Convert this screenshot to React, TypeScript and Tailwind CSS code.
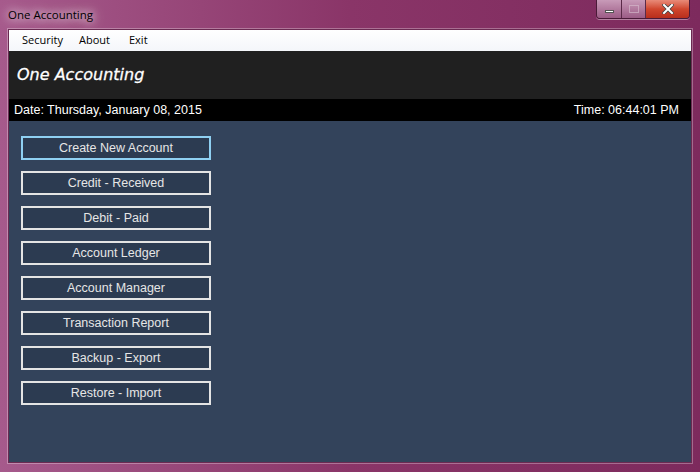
import React from 'react';

const actions = [
  'Create New Account',
  'Credit - Received',
  'Debit - Paid',
  'Account Ledger',
  'Account Manager',
  'Transaction Report',
  'Backup - Export',
  'Restore - Import',
];

export default function App() {
  return (
    <div className="w-[700px] h-[472px] flex flex-col bg-gradient-to-r from-[#a65a8c] via-[#8a3568] to-[#7d2a5d] font-['Liberation_Sans',Arial,sans-serif] overflow-hidden">
      {/* title bar */}
      <div className="h-[29px] flex items-start justify-between shrink-0">
        <span className="ml-[8px] mt-[6px] text-[11.5px] text-black font-['Open_Sans',sans-serif] [text-shadow:0_0_8px_#fff,0_0_14px_#fff]">
          One Accounting
        </span>
        <div className="flex mr-[10px] h-[19px] rounded-b-[4px] overflow-hidden border border-t-0 border-[#4a1a38] shadow-[0_1px_0_rgba(255,255,255,0.4)]">
          <div className="w-[25px] flex items-center justify-center bg-gradient-to-b from-[#c89ab8] to-[#9c5c86] border-r border-[#5a2a48]">
            <div className="w-[9px] h-[3px] bg-white border border-[#555] mt-[4px]" />
          </div>
          <div className="w-[24px] flex items-center justify-center bg-gradient-to-b from-[#c89ab8] to-[#9c5c86] border-r border-[#5a2a48]">
            <div className="w-[10px] h-[8px] border border-[#d8c0d0] opacity-60" />
          </div>
          <div className="w-[43px] flex items-center justify-center bg-gradient-to-b from-[#e88a78] via-[#d0462e] to-[#b82e1c]">
            <svg width="12" height="10" viewBox="0 0 12 10">
              <path d="M2 1 L10 9 M10 1 L2 9" stroke="#444" strokeWidth="3.6" strokeLinecap="square" />
              <path d="M2 1 L10 9 M10 1 L2 9" stroke="#fff" strokeWidth="2" strokeLinecap="square" />
            </svg>
          </div>
        </div>
      </div>

      {/* client area */}
      <div className="flex-1 mx-[8px] mb-[9px] flex flex-col border border-[#6a2a52] shadow-[0_0_0_1px_rgba(255,255,255,0.3)]">
        <div className="h-[21px] bg-gradient-to-b from-[#ffffff] to-[#f4f6fa] flex items-center pl-[13px] text-[11px] text-black font-['Open_Sans',sans-serif] shrink-0">
          <span className="w-[57px]">Security</span>
          <span className="w-[50px]">About</span>
          <span>Exit</span>
        </div>
        <div className="h-[48px] bg-[#202020] flex items-center pl-[8px] shrink-0">
          <span className="text-white text-[16px] italic font-['DejaVu_Sans',sans-serif] [-webkit-text-stroke:0.3px_white]">
            One Accounting
          </span>
        </div>
        <div className="h-[22px] bg-black flex items-center justify-between px-[5px] pr-[12px] text-[12.5px] text-white shrink-0">
          <span>Date: Thursday, January 08, 2015</span>
          <span>Time: 06:44:01 PM</span>
        </div>
        <div className="flex-1 bg-[#33435b] flex flex-col gap-[11px] pt-[15px] pl-[12px]">
          {actions.map((a, i) => (
            <button
              key={a}
              className={
                i === 0
                  ? 'w-[190px] h-[24px] bg-[#2c3b51] border-2 border-[#8fd0f2] text-[12.5px] text-[#e6e6e6] flex items-center justify-center'
                  : 'w-[190px] h-[24px] bg-[#2c3b51] border-2 border-[#e4e4e4] text-[12.5px] text-[#e6e6e6] flex items-center justify-center'
              }
            >
              {a}
            </button>
          ))}
        </div>
      </div>
    </div>
  );
}
